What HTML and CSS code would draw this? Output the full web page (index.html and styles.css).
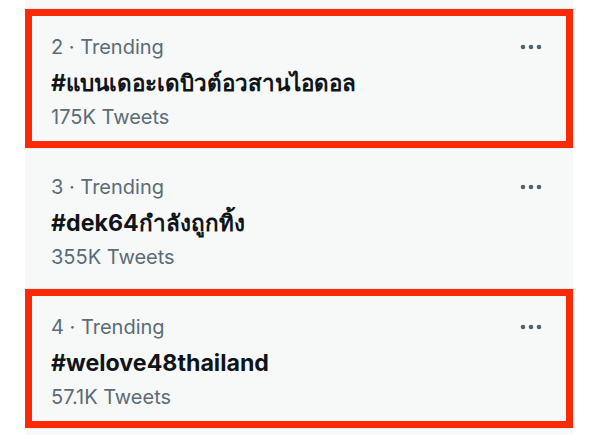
FILE: index.html
```html
<!DOCTYPE html>
<html>
<head>
<meta charset="utf-8">
<link rel="stylesheet" href="styles.css">
</head>
<body>
<div class="panel">
  <div class="row partial"></div>
  <div class="row highlight">
    <div class="info">
      <div class="meta">2 · Trending</div>
      <div class="title">#<span class="thai">แบนเดอะเดบิวต์อวสานไอดอล</span></div>
      <div class="meta">175K Tweets</div>
    </div>
    <svg class="more" viewBox="0 0 24 8" width="24" height="8"><circle cx="4" cy="4" r="2.3"/><circle cx="12" cy="4" r="2.3"/><circle cx="20" cy="4" r="2.3"/></svg>
  </div>
  <div class="row">
    <div class="info">
      <div class="meta">3 · Trending</div>
      <div class="title">#dek64<span class="thai">กำลังถูกทิ้ง</span></div>
      <div class="meta">355K Tweets</div>
    </div>
    <svg class="more" viewBox="0 0 24 8" width="24" height="8"><circle cx="4" cy="4" r="2.3"/><circle cx="12" cy="4" r="2.3"/><circle cx="20" cy="4" r="2.3"/></svg>
  </div>
  <div class="row highlight">
    <div class="info">
      <div class="meta">4 · Trending</div>
      <div class="title">#welove48thailand</div>
      <div class="meta">57.1K Tweets</div>
    </div>
    <svg class="more" viewBox="0 0 24 8" width="24" height="8"><circle cx="4" cy="4" r="2.3"/><circle cx="12" cy="4" r="2.3"/><circle cx="20" cy="4" r="2.3"/></svg>
  </div>
  <div class="row partial"></div>
</div>
</body>
</html>
```

FILE: styles.css
```css
html, body {
  margin: 0;
  padding: 0;
  background: #ffffff;
}
body {
  font-family: Inter, "Liberation Sans", sans-serif;
  width: 600px;
  height: 435px;
  overflow: hidden;
}
.panel {
  margin-left: 25px;
  width: 548px;
  background: #f7f9f9;
  display: flex;
  flex-direction: column;
}
.row {
  box-sizing: border-box;
  height: 140px;
  border-bottom: 1px solid #e9edee;
  display: flex;
  justify-content: space-between;
  align-items: flex-start;
  padding: 26px 30px 0 26px;
}
.row.partial {
  height: 9px;
  padding: 0;
}
.row.highlight {
  box-shadow: inset 0 0 0 7px #fb2a06;
}
.info {
  display: flex;
  flex-direction: column;
}
.meta {
  font-size: 20px;
  line-height: 24px;
  color: #5b6b78;
}
.title {
  font-size: 23.2px;
  line-height: 36px;
  font-weight: 700;
  color: #0f1419;
  margin: 6px 0 4px;
}
.thai {
  font-size: 22.4px;
}
.more {
  fill: #536471;
  margin-top: 8px;
}
```
